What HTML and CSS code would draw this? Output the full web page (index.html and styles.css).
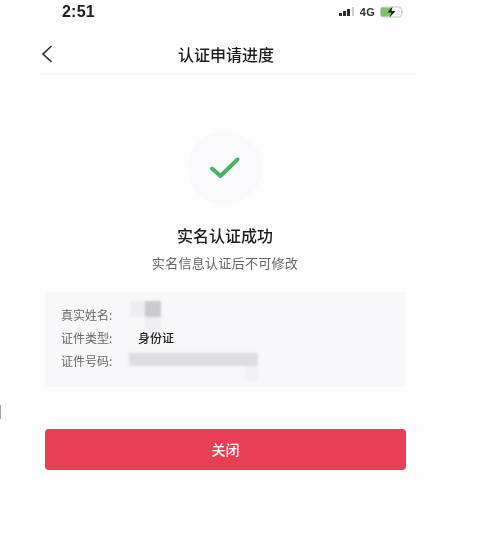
FILE: index.html
```html
<!DOCTYPE html>
<html lang="zh">
<head>
<meta charset="utf-8">
<title>认证申请进度</title>
<link rel="stylesheet" href="styles.css">
</head>
<body>
<div class="page">
  <div class="status">
    <span class="time">2:51</span>
    <div class="status-right">
      <svg class="signal" width="16" height="10" viewBox="0 0 16 10"><rect class="s-on" x="0" y="6" width="3" height="3"/><rect class="s-on" x="4" y="4" width="3" height="5"/><rect class="s-on" x="8" y="2" width="3" height="7"/><rect class="s-off" x="13" y="0" width="2" height="9"/></svg>
      <span class="net">4G</span>
      <svg class="battery" width="24" height="12" viewBox="0 0 24 12"><rect x="0.5" y="1" width="21" height="10" rx="3" fill="none" stroke="#c8c8c8"/><rect x="1" y="1.5" width="10" height="9" fill="#7fc46c"/><path d="M22.5 4.5v3" stroke="#c8c8c8"/><path d="M12.5 0.5L7.5 6.5h4L9.5 11.5l6-6.5h-4z" fill="#1a1a1a"/></svg>
    </div>
  </div>
  <header class="nav">
    <svg class="back" width="12" height="18" viewBox="0 0 12 18"><path d="M10.5 1L2 9l8.5 8" fill="none" stroke="#2a2a2a" stroke-width="1.6"/></svg>
    <h1 class="nav-title">认证申请进度</h1>
  </header>
  <main class="content">
    <div class="badge">
      <svg width="32" height="24" viewBox="0 0 32 24"><path d="M3 12.5L11.5 20L28.5 3.5" fill="none" stroke="#46b268" stroke-width="4" stroke-linecap="round" stroke-linejoin="round"/></svg>
    </div>
    <h2 class="result">实名认证成功</h2>
    <p class="hint">实名信息认证后不可修改</p>
    <section class="card">
      <div class="row"><span class="label">真实姓名:</span><span class="mask mask-name"></span></div>
      <div class="row"><span class="label">证件类型:</span><span class="value">身份证</span></div>
      <div class="row"><span class="label">证件号码:</span><span class="mask mask-id"></span></div>
    </section>
    <button class="close">关闭</button>
  </main>
  <span class="edge-mark"></span>
</div>
</body>
</html>
```
FILE: styles.css
```css
* { box-sizing: border-box; }
html, body { margin: 0; padding: 0; }
body {
  width: 500px;
  height: 554px;
  overflow: hidden;
  background: #fdfdfe;
  font-family: "Noto Sans CJK SC", "Noto Sans", sans-serif;
  color: #1c1c1e;
}
.page { height: 554px; display: flex; flex-direction: column; position: relative; filter: blur(0.35px); }
.status {
  height: 24px;
  padding: 0 96px 0 62px;
  display: flex;
  align-items: center;
  justify-content: space-between;
}
.time {
  font-family: "Liberation Sans", sans-serif;
  font-weight: 700;
  font-size: 16px;
  letter-spacing: 0.2px;
  color: #202020;
}
.status-right { display: flex; align-items: center; gap: 5px; }
.signal .s-on { fill: #2a2a2a; }
.signal .s-off { fill: #cfcfcf; }
.net { font-family: "Liberation Sans", sans-serif; font-size: 11px; font-weight: 700; color: #333; letter-spacing: 0.3px; }
.nav {
  margin: 0 82px 0 36px;
  width: 382px;
  height: 51px;
  padding-top: 10px;
  border-bottom: 1px solid #f8f8fa;
  display: flex;
  align-items: center;
  position: relative;
  justify-content: center;
}
.back { position: absolute; left: 5px; top: 21px; }
.nav-title {
  margin: 0 0 0 -2px;
  font-size: 16px;
  font-weight: 500;
  line-height: 24px;
}
.content { display: flex; flex-direction: column; align-items: center; padding-top: 56px; width: 450px; }
.badge {
  width: 74px;
  height: 74px;
  border-radius: 50%;
  background: #f9f9fb;
  display: flex;
  align-items: center;
  justify-content: center;
}
.result { margin: 18px 0 0; font-size: 16px; font-weight: 500; line-height: 24px; }
.hint { margin: 6px 0 0; font-size: 13px; line-height: 20px; color: #666; letter-spacing: 0.3px; }
.card {
  margin: 19px 0 0 45px;
  width: 360px;
  height: 95px;
  background: #f8f8fa;
  padding: 14px 16px;
  display: flex;
  flex-direction: column;
  gap: 5px;
  align-self: flex-start;
}
.row { height: 18px; display: flex; align-items: center; font-size: 12px; line-height: 18px; }
.label { width: 77px; flex: none; color: #666; }
.value { font-weight: 500; color: #1f1f1f; }
.mask { display: block; flex: none; filter: blur(1.2px); background-repeat: no-repeat; }
.mask-name {
  width: 31px;
  height: 29px;
  margin-left: -8px;
  background-image:
    linear-gradient(#cbcbce, #cbcbce),
    linear-gradient(#eeeef0, #eeeef0),
    linear-gradient(#eeeef0, #eeeef0);
  background-size: 16px 16px, 15px 16px, 16px 13px;
  background-position: right top, left top, right bottom;
}
.mask-id {
  width: 129px;
  height: 28px;
  margin: 12px 0 0 -9px;
  background-image:
    linear-gradient(#dedee0, #dedee0),
    linear-gradient(#f1f1f3, #f1f1f3);
  background-size: 100% 13px, 13px 15px;
  background-position: left top, right bottom;
}
.close {
  align-self: flex-start;
  margin: 42px 0 0 45px;
  width: 361px;
  height: 41px;
  padding: 0 0 2px;
  border: 0;
  border-radius: 4px;
  background: #e83f55;
  color: #fff;
  font-family: inherit;
  font-size: 14px;
  font-weight: 500;
}
.edge-mark { position: absolute; left: 0; top: 405px; width: 1px; height: 14px; background: #a8a8a8; }
```
